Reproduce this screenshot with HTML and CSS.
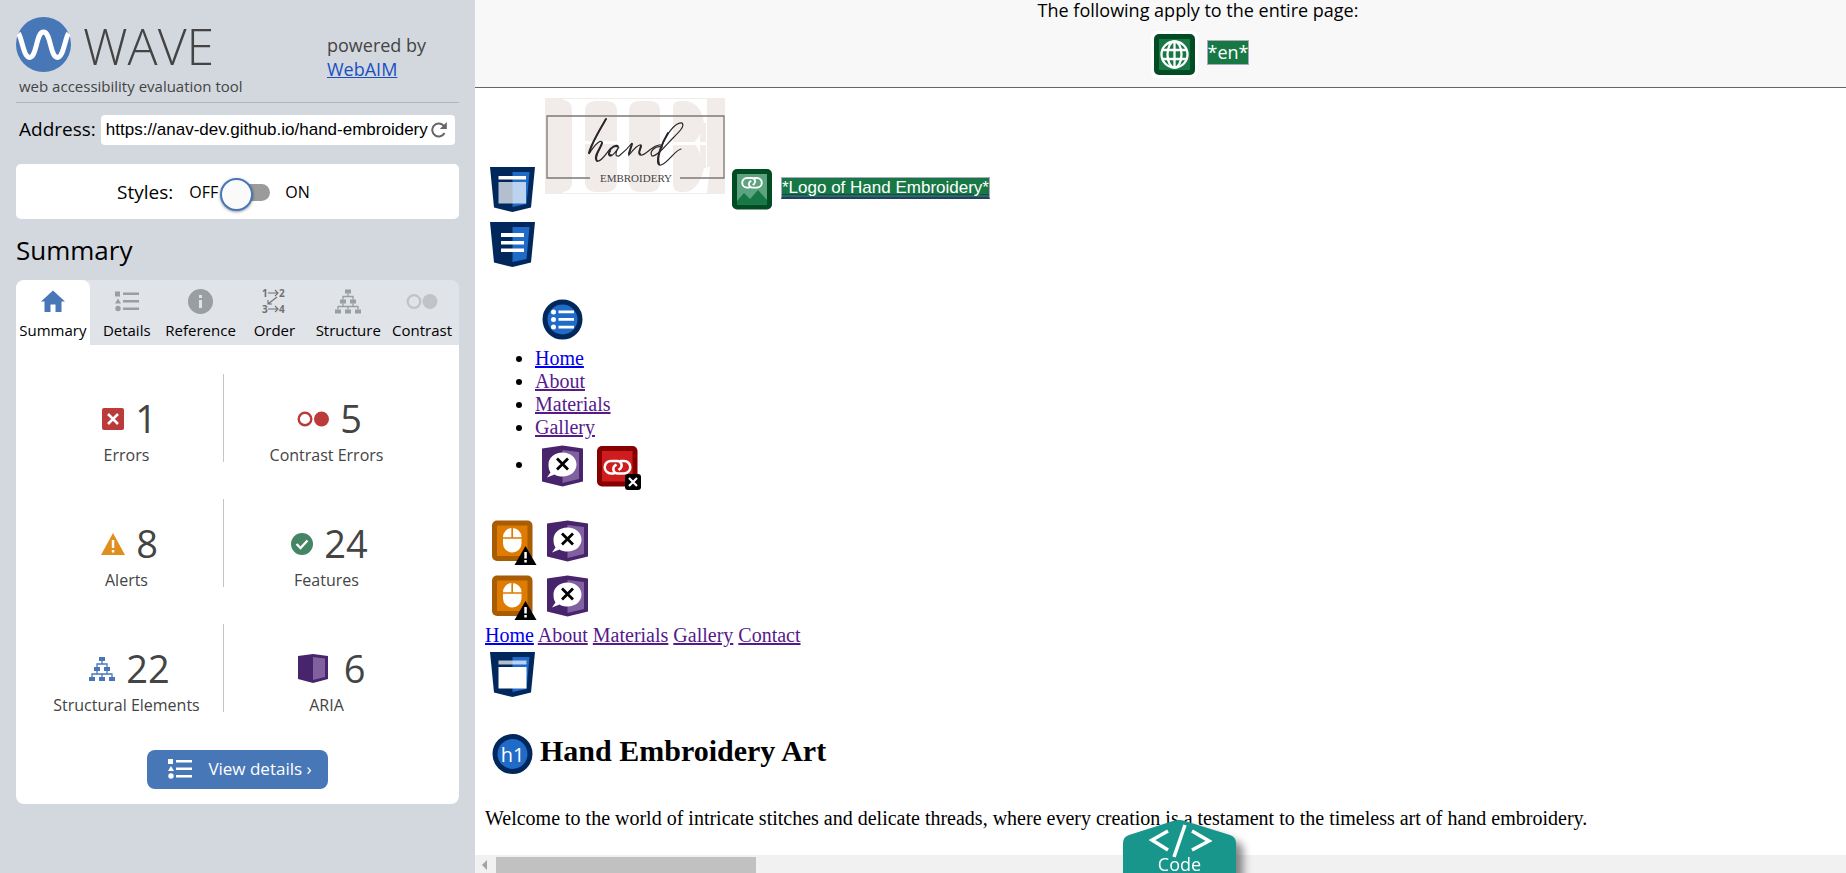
FILE: index.html
```html
<!DOCTYPE html>
<html lang="en">
<head>
<meta charset="utf-8">
<title>WAVE Report</title>
<link rel="stylesheet" href="styles.css">
</head>
<body>
<svg class="defs" aria-hidden="true">
  <symbol id="list" viewBox="0 0 24 22"><path d="M0 1h5v5H0zM8 2h16v2.500H8zM3 8l3 5H0zM8 9.500h16V12H8zM8 17h16v2.500H8z"/><circle cx="3" cy="18" r="2.700"/></symbol>
  <symbol id="tree" viewBox="0 0 26 24"><path d="M10 0h6v4h-6zM5 10h6v4H5zM15 10h6v4h-6zM0 20h6v4H0zM10 20h6v4h-6zM20 20h6v4h-6z"/><path d="M13 4v3M8 10V7h10v3M8 14v3M18 14v3M3 20v-3h20v3M13 17v3" fill="none" stroke="currentColor" stroke-width="1.300"/></symbol>
  <symbol id="shield" viewBox="0 0 55 55"><path fill="#00285c" d="M5 5h45l-4 40.500L27.500 50 9 45.500z"/><path fill="#206bc8" d="M27.500 10h17L41.500 42l-14 3z"/></symbol>
  <symbol id="link" viewBox="0 0 55 55"><path d="M24.500 33.500h-3.500a6.300 6.300 0 0 1 0-12.600H27.500a4.500 4.500 0 0 1 3 7.500l-2 1.600M30 20.900h4a6.300 6.300 0 0 1 0 12.600h-6.500a4.500 4.500 0 0 1-3-7.500l2-1.600" fill="none" stroke="#fff" stroke-width="2.500"/></symbol>
  <symbol id="aria" viewBox="0 -2 55 55"><path fill="#48246c" d="M7 7.500l20.500-3L48 7.500v33l-20.500 5L7 40.500z"/><path fill="#80609f" d="M27.500 9L44 11v27l-16.500 4z"/><path fill="#fff" d="M27.500 11.500c8 0 14 5 14 12s-6 12-14 12c-3 0-6-.6-8-2l-7.500 3 3.500-5c-1.500-2-2-5-2-8 0-7 6-12 14-12z"/><path d="M22 17.500l11 11m0-11l-11 11" fill="none" stroke="#000" stroke-width="2.800"/></symbol>
  <symbol id="mouse" viewBox="0 -1 55 55"><rect x="7" y="5.500" width="40.500" height="40.500" rx="5" fill="#a85c04"/><path fill="#df7b00" d="M12 10.500h30.500v30.500H12z"/><rect x="18" y="13" width="18.500" height="24.500" rx="9" fill="#fff"/><path d="M17 23h20M27.200 13v10" stroke="#df7b00" stroke-width="1.700"/><path d="M40.500 31L51.500 50h-22z"/><path fill="#fff" d="M39.300 37h2.500v6.500h-2.500zM39.300 45h2.500v2.500h-2.500z"/></symbol>
</svg>

<aside class="sidebar">
  <header class="brand">
    <div class="brand-main">
      <div class="brand-row">
        <svg class="brand-mark" viewBox="0 0 55 55" aria-hidden="true"><circle cx="27.500" cy="27.500" r="27.500" fill="#4877b8"/><path d="M2.500 16.500c3 3 5 24 11 24 7.500 0 6.500-25.500 14-25.500s6.500 25.500 14 25.500c6 0 8-21 11-24" fill="none" stroke="#fff" stroke-width="5"/></svg>
        <span class="brand-name">WAVE</span>
      </div>
      <div class="tagline">web accessibility evaluation tool</div>
    </div>
    <div class="powered">powered by<br><a href="#">WebAIM</a></div>
  </header>
  <form class="address">
    <label for="url">Address:</label>
    <div class="address-box">
      <input id="url" type="text" value="https://anav-dev.github.io/hand-embroidery">
      <button type="button" aria-label="Reload"><svg viewBox="0 0 16 16" width="16" height="16"><path d="M13.500 11A6.500 6.500 0 1 1 12.400 3.400L14 5" fill="none" stroke="#666" stroke-width="2"/><path d="M15.800 0v7H8.800z" fill="#666"/></svg></button>
    </div>
  </form>
  <div class="styles-card">
    <span class="styles-label">Styles:</span>
    <label for="toggle">OFF</label>
    <input class="toggle" id="toggle" type="checkbox">
    <label class="on" for="toggle">ON</label>
  </div>
  <h2 class="side-title">Summary</h2>
  <nav class="tabs">
    <button class="tab active"><svg viewBox="0 0 24 22" width="24" height="22"><path fill="#4877b8" d="M12 0l12 11h-3.500v10.500h-6V14h-5v7.500h-6V11H0z"/></svg>Summary</button>
    <button class="tab"><svg width="24" height="22"><use href="#list"/></svg>Details</button>
    <button class="tab"><svg viewBox="0 0 25 25" width="25" height="25"><circle cx="12.500" cy="12.500" r="12.500"/><path fill="#e0e3e8" d="M11 6h3v3h-3zM11 11h3v8h-3z"/></svg>Reference</button>
    <button class="tab"><svg class="order" viewBox="-4 -4 32 32" width="32" height="32"><text x="0" y="8">1</text><text x="17" y="8">2</text><text x="0" y="24">3</text><text x="17" y="24">4</text><path d="M6 4h10M13 1l3 3-3 3M6 20h10M13 17l3 3-3 3M15 8l-9 7M6 11v4h4" fill="none" stroke="#6f7174" stroke-width="1.100"/></svg>Order</button>
    <button class="tab"><svg width="26" height="24"><use href="#tree"/></svg>Structure</button>
    <button class="tab"><svg viewBox="0 0 32 25" width="32" height="25"><circle cx="8" cy="12.500" r="6.300" fill="none" stroke="#c0c4c8" stroke-width="2.300"/><circle cx="24" cy="12.500" r="7.500" fill="#c0c4c8"/></svg>Contrast</button>
  </nav>
  <section class="panel">
    <div class="stats">
      <div class="stat"><div class="stat-top"><svg viewBox="0 0 22 22" width="22" height="22"><rect width="22" height="22" rx="2" fill="#bb3a3a"/><path d="M6 6l10 10M16 6L6 16" stroke="#fff" stroke-width="2.500"/></svg><b>1</b></div>Errors</div>
      <div class="stat"><div class="stat-top"><svg viewBox="0 0 32 22" width="32" height="22"><circle cx="8" cy="11" r="6.300" fill="none" stroke="#bb3a3a" stroke-width="2.400"/><circle cx="24.500" cy="11" r="7.500" fill="#bb3a3a"/></svg><b>5</b></div>Contrast Errors</div>
      <div class="stat"><div class="stat-top"><svg viewBox="0 0 24 22" width="24" height="22"><path fill="#e08e1e" d="M12 0l12 22H0z"/><path fill="#fff" d="M10.800 7h2.500v8h-2.500zM10.800 17h2.500v2.500h-2.500z"/></svg><b>8</b></div>Alerts</div>
      <div class="stat"><div class="stat-top"><svg viewBox="0 0 22 22" width="22" height="22"><circle cx="11" cy="11" r="11" fill="#438564"/><path d="M5.500 11l4 4 7-7.500" fill="none" stroke="#fff" stroke-width="2.300"/></svg><b>24</b></div>Features</div>
      <div class="stat"><div class="stat-top"><svg class="blue" width="26" height="24"><use href="#tree"/></svg><b>22</b></div>Structural Elements</div>
      <div class="stat wide"><div class="stat-top"><svg viewBox="0 0 30 30" width="30" height="30"><path fill="#48246c" d="M0 2l15-2 15 2v23l-15 4-15-4z"/><path fill="#80609f" d="M15 3l12 1.500v18.500l-12 3z"/></svg><b>6</b></div>ARIA</div>
    </div>
    <button class="details"><svg width="24" height="22"><use href="#list"/></svg>View details ›</button>
  </section>
</aside>

<main class="view">
  <div class="page-wide">
    <div>The following apply to the entire page:</div>
    <div class="page-icons">
      <svg class="ico" viewBox="0 0 55 55"><rect x="4" y="4" width="47" height="47" rx="6" fill="#fff"/><rect x="7" y="7" width="41" height="41" rx="5" fill="#024c24"/><path fill="#177845" d="M12 12h31v31H12z"/><g fill="none" stroke="#fff" stroke-width="2.300"><circle cx="27.500" cy="27.500" r="13"/><ellipse cx="27.500" cy="27.500" rx="7" ry="13"/><path d="M27.500 14v27M15 23h25M15 32h25"/></g></svg>
      <span class="tag en">*en*</span>
    </div>
  </div>
  <div class="document">
    <a class="line logo-line" href="#">
      <svg class="ico" viewBox="0 0 55 55"><use href="#shield"/><path fill="#fff" d="M13.500 14H41v3.500H13.500z"/><path fill="#fff" opacity=".7" d="M13.500 20H41v21.500H13.500z"/></svg>
      <svg class="logo" viewBox="0 0 180 96" role="img" aria-label="hand embroidery"><path fill="#f1ebea" d="M0 0h180v96H0z"/><path fill="#fff" d="M18 1H162v94H18z"/><path fill="#f1ebea" d="M0 0h18v2q9 1 9 10v72q0 9-9 10v2H0zM50 3h12q10 1 10 9v31H40V12q0-8 10-9zM40 46h32v38q0 9-10 10H50q-10-1-10-10zM94 3h12q9 1 9 9v72q0 9-9 10H94q-10-1-10-10V12q0-8 10-9zM135 3h6q15 2 18 22h2v19h-33V10q0-7 7-7zM128 47h33v23h-2q-5 22-19 24h-5q-7-1-7-8z"/><path fill="#fff" d="M150 1h10l2 24h-2c-2-12-5-19-10-22zM150 95h12l3-26h-2c-3 14-7 22-13 24zM150 43c3-2 4-5 5-8v22c-1-4-2-8-5-10z"/><path d="M45 80H2V18h177v62h-44" fill="none" stroke="#7d7876" stroke-width="1.300"/><g fill="none" stroke="#29272a" stroke-linecap="round"><path d="M61 21C54 33 46 46 44 56 50 46 55 42 57 44 58 48 48 58 52 63 56 64 60 57 65 51 70 46 74 47 73 49 68 46 62 55 65 58 69 58 72 51 74 49 70 55 70 59 74 58 79 54 84 49 87 45 86 50 84 54 84 57 88 52 93 46 96 47 97 50 92 55 95 57 99 58 103 53 106 51 112 46 118 46 117 49 110 47 104 54 107 58 113 58 120 48 128 40 135 33 140 28 137 25 130 24 120 38 116 50 112 60 111 68 116 67 124 64 129 53 136 51" stroke-width="1.200"/><path d="M61 21C54 33 46 46 44 55M57 45C56 50 48 58 52 63M65 53c-2 3-1 5 1 4M87 46c-1 4-3 8-3 10M96 48c-1 4-3 7-1 8M123 35c-6 10-12 25-9 31" stroke-width="2"/></g><text x="91" y="84" text-anchor="middle">EMBROIDERY</text></svg>
      <svg class="ico" viewBox="0 0 55 55"><rect x="7" y="7" width="40" height="40.500" rx="5" fill="#024c24"/><path fill="#5ba47f" d="M12 12h30v30.500H12z"/><path fill="#177845" d="M12 39l7-8 6 6 8-9 9 10v4.500H12z"/><use href="#link" width="42" height="42" x="6" y="0"/></svg>
      <span class="tag alt">*Logo of Hand Embroidery*</span>
    </a>
    <div class="line"><svg class="ico" viewBox="0 0 55 55"><use href="#shield"/><path fill="#fff" d="M16 16h23v4H16zM16 24h23v3.500H16zM16 31.500h23v3.500H16z"/></svg></div>
    <ul class="menu">
      <li class="plain"><svg class="ico" viewBox="0 0 55 55"><circle cx="27.500" cy="27.500" r="17.500" fill="#206bc8" stroke="#00285c" stroke-width="5"/><g fill="#fff"><circle cx="18.500" cy="20" r="2.500"/><circle cx="18.500" cy="27.500" r="2.500"/><circle cx="18.500" cy="35" r="2.500"/><path d="M23.500 18.500H39v2.800H23.500zM23.500 26H39v2.800H23.500zM23.500 33.700H39v2.800H23.500z"/></g></svg></li>
      <li><a href="#home">Home</a></li>
      <li><a class="seen" href="#">About</a></li>
      <li><a class="seen" href="#">Materials</a></li>
      <li><a class="seen" href="#">Gallery</a></li>
      <li class="icons"><svg class="ico" viewBox="0 0 55 55"><use href="#aria"/></svg><svg class="ico" viewBox="0 -1 55 55"><rect x="7" y="6" width="40.500" height="40.500" rx="5" fill="#870000"/><path fill="#cf1d1f" d="M12 11h30.500v30.500H12z"/><use href="#link"/><rect x="35" y="34" width="16" height="16" rx="3"/><path d="M39 38l8 8m0-8l-8 8" stroke="#fff" stroke-width="2.200"/></svg></li>
    </ul>
    <div class="line"><svg class="ico" viewBox="0 0 55 55"><use href="#mouse"/></svg><svg class="ico" viewBox="0 0 55 55"><use href="#aria"/></svg></div>
    <div class="line"><svg class="ico" viewBox="0 0 55 55"><use href="#mouse"/></svg><svg class="ico" viewBox="0 0 55 55"><use href="#aria"/></svg></div>
    <div><a href="#home">Home</a> <a class="seen" href="#">About</a> <a class="seen" href="#">Materials</a> <a class="seen" href="#">Gallery</a> <a class="seen" href="#">Contact</a></div>
    <div class="line"><svg class="ico" viewBox="0 0 55 55"><use href="#shield"/><path fill="#fff" opacity=".7" d="M13.500 13.500h28v4h-28z"/><path fill="#fff" d="M13.500 20h28v21.500h-28z"/></svg></div>
    <h1 class="title"><svg class="ico" viewBox="0 0 55 55"><circle cx="27.500" cy="27" r="17.500" fill="#206bc8" stroke="#00285c" stroke-width="5"/><text x="27.500" y="35" text-anchor="middle">h1</text></svg>Hand Embroidery Art</h1>
    <p class="intro">Welcome to the world of intricate stitches and delicate threads, where every creation is a testament to the timeless art of hand embroidery.</p>
  </div>
  <div class="scrollbar"><span class="arrow"></span><span class="thumb"></span></div>
  <button class="code"><svg viewBox="0 0 113 60" width="113" height="60"><path fill="#18968c" d="M0 60V23q0-6 6-8L50 1q6-2 12 0l45 14q6 2 6 8v37z"/><path d="M45 11L29 20l16 10M69 11l17 10-17 9M62 5L51 37" fill="none" stroke="#fff" stroke-width="3.500"/></svg><span>Code</span></button>
</main>
</body>
</html>
```

FILE: styles.css
```css
* { box-sizing: border-box; }
body { margin: 0; height: 100vh; display: flex; overflow: hidden; background: #fff; font-family: "Open Sans", sans-serif; color: #000; }
button { font: inherit; border: 0; padding: 0; margin: 0; background: none; cursor: pointer; }
svg { flex: none; }
.defs { position: absolute; width: 0; height: 0; }

.sidebar { width: 475px; flex: none; padding: 17px 16px 0; background: #d3d8df; }
.brand { display: flex; height: 86px; border-bottom: 1px solid #aeb4c0; color: #444; }
.brand-main { width: 311px; }
.brand-row { display: flex; align-items: center; gap: 12px; height: 55px; }
.brand-mark { width: 55px; height: 55px; }
.brand-name { padding-top: 4px; font-size: 50px; font-weight: 300; line-height: 55px; }
.tagline { padding-left: 3px; font-size: 15px; line-height: 28px; }
.powered { padding-top: 16px; font-size: 18px; line-height: 24px; }
.powered a { color: #1b4fc0; }
.address { display: flex; align-items: center; gap: 5px; margin: 12px 4px 0 3px; }
.address label { padding-bottom: 2px; font-size: 19px; line-height: 28px; }
.address-box { flex: 1; display: flex; align-items: center; height: 30px; padding-right: 8px; border-radius: 4px; background: #fff; }
.address-box input { flex: 1; min-width: 0; border: 0; padding: 0 0 0 5px; background: none; font: 17px "Liberation Sans", Arial, sans-serif; }
.address-box button { display: flex; }
.styles-card { display: flex; align-items: center; height: 55px; margin-top: 19px; padding-left: 101px; border-radius: 5px; background: #fff; font-size: 16px; }
.styles-label { margin-right: 16px; font-size: 19px; }
.toggle { appearance: none; position: relative; width: 46px; height: 17px; margin: 3px 15px 2px 6px; border-radius: 9px; background: #9b9b9b; }
.toggle::before { content: ""; position: absolute; left: -4px; top: -6px; width: 29px; height: 29px; border: 2px solid #4877b8; border-radius: 50%; background: #fafafa; box-shadow: 0 1px 3px #0006; }
.side-title { margin: 15px 0 14px; font-size: 26px; font-weight: 400; line-height: 32px; }
.tabs { display: grid; grid-template-columns: repeat(6, 1fr); height: 65px; border-radius: 8px 8px 0 0; background: #e0e3e8; }
.tab { display: flex; flex-direction: column; align-items: center; justify-content: flex-end; gap: 5px; padding-bottom: 4px; font-size: 15px; line-height: 22px; color: #000; fill: #999ea2; }
.tab svg { height: 25px; color: #999ea2; }
.tab .order { height: 32px; margin: -4px 0 -3px; }
.tab.active { border-radius: 8px 8px 0 0; background: #fff; }
.order text { font: 700 10px "Open Sans", sans-serif; fill: #6f7174; }
.panel { display: flex; flex-direction: column; align-items: center; padding: 29px 36px 15px; border-radius: 0 0 8px 8px; background: #fff; }
.stats { align-self: stretch; display: grid; grid-template-columns: 172px 1fr; row-gap: 37px; margin-bottom: 38px; }
.stat { height: 88px; padding-top: 20px; text-align: center; font-size: 16px; line-height: 24px; color: #444; white-space: nowrap; }
.stat:nth-child(odd) { border-right: 1px solid #c4c4c4; padding-right: 22px; }
.stat:nth-child(even) { padding-left: 6px; }
.stat-top { display: flex; align-items: center; justify-content: center; gap: 11px; height: 49px; padding-left: 6px; }
.wide .stat-top { gap: 16px; padding-left: 10px; }
.stat b { font-size: 38px; font-weight: 400; line-height: 49px; }
.blue { fill: #4877b8; color: #4877b8; }
.details { display: flex; align-items: center; gap: 16px; height: 39px; padding: 0 16px 2px 21px; border-radius: 8px; background: #4877b8; color: #fff; fill: #fff; font-size: 17px; }

.view { position: relative; flex: 1; min-width: 0; display: flex; flex-direction: column; overflow: hidden; }
.page-wide { flex: none; height: 88px; padding-left: 75px; border-bottom: 1px solid #666; background: #f8f8f8; text-align: center; font-size: 18px; line-height: 21px; }
.page-icons { display: flex; justify-content: center; align-items: center; gap: 5px; padding-top: 6px; }
.ico { width: 55px; height: 55px; flex: none; }
.tag { background: #177845; color: #fff; border: 1px solid #aaaabb; }
.en { margin-bottom: 5px; font-size: 18px; line-height: 23px; }
.document { flex: 1; min-height: 0; overflow: hidden; padding: 10px; font: 20px/23px "Liberation Serif", "Times New Roman", serif; }
.document a { color: #0000ee; }
.document a.seen { color: #551a8b; }
.line { display: flex; align-items: flex-end; }
.document .logo-line { color: #2b3a6e; }
.logo { width: 180px; height: 96px; margin: 0 0 23px 5px; }
.logo text { font: 11px "Liberation Serif", serif; fill: #444; }
.document .alt { margin: 0 0 18px 1px; padding-top: 1px; border-bottom: 2px solid #2b3a6e; font: 17px/18px "Liberation Sans", Arial, sans-serif; color: #fff; }
.menu { margin: 20px 0; padding-left: 50px; }
.plain { display: flex; }
.icons { line-height: 50px; }
.icons .ico { vertical-align: middle; }
.title { display: flex; margin: 25px 0; font-size: 30px; line-height: 48px; }
.title text { font: 20px "Open Sans", sans-serif; fill: #fff; }
.intro { margin: 0; white-space: nowrap; }
.scrollbar { flex: none; display: flex; align-items: center; height: 18px; padding-top: 2px; background: #f1f1f1; }
.arrow { margin: 0 9px 0 7px; border: solid transparent; border-width: 5px 5px 5px 0; border-right-color: #a3a3a3; }
.thumb { width: 260px; height: 16px; background: #c1c1c1; }
.code { position: absolute; left: 648px; bottom: -7px; height: 60px; color: #fff; font-size: 18px; line-height: 20px; filter: drop-shadow(7px 7px 4px #0007); }
.code svg { display: block; }
.code span { position: absolute; inset: 34px 0 auto; }
```
